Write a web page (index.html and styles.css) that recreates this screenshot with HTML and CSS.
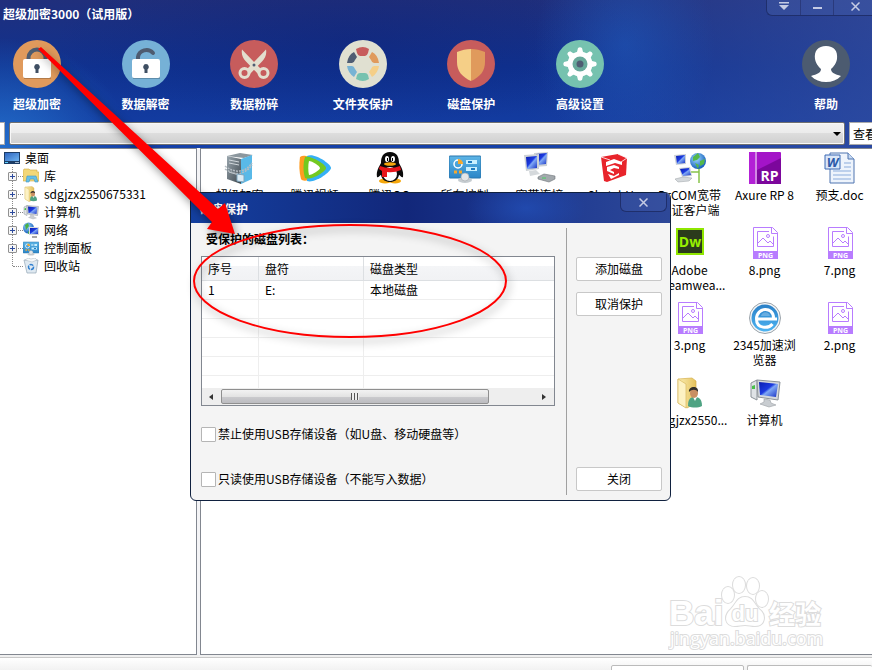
FILE: index.html
```
<!DOCTYPE html>
<html lang="zh-CN">
  <head>
    <meta charset="utf-8">
    <title>超级加密3000</title>
    <link rel="stylesheet" href="styles.css">
  </head>

  <body>
    <svg class="sprite" aria-hidden="true">
      <defs>
        <linearGradient id="g-screen" x1="0" y1="0" x2="1" y2="1">
          <stop offset="0" stop-color="#0a1db0"/>
          <stop offset=".45" stop-color="#1c3be0"/>
          <stop offset=".55" stop-color="#7fa8f5"/>
          <stop offset="1" stop-color="#1630c4"/>
        </linearGradient>
        <linearGradient id="g-folder" x1="0" y1="0" x2="1" y2="0">
          <stop offset="0" stop-color="#fbeeb4"/>
          <stop offset="1" stop-color="#e5c25c"/>
        </linearGradient>
        <linearGradient id="g-panel" x1="0" y1="0" x2="0" y2="1">
          <stop offset="0" stop-color="#5db5e6"/>
          <stop offset="1" stop-color="#2b86c8"/>
        </linearGradient>
        <linearGradient id="g-desk" x1="0" y1="0" x2="1" y2="1">
          <stop offset="0" stop-color="#2f66c0"/>
          <stop offset="1" stop-color="#6fb4f0"/>
        </linearGradient>
        <linearGradient id="g-steel" x1="0" y1="0" x2="1" y2="1">
          <stop offset="0" stop-color="#9aa6ae"/>
          <stop offset="1" stop-color="#3c464d"/>
        </linearGradient>
        <radialGradient id="g-globe" cx=".4" cy=".35" r=".7">
          <stop offset="0" stop-color="#9fdcff"/>
          <stop offset="1" stop-color="#0c55b8"/>
        </radialGradient>
        <linearGradient id="g-browser" x1="0" y1="0" x2="0" y2="1">
          <stop offset="0" stop-color="#2a7fc6"/>
          <stop offset="1" stop-color="#4db4f2"/>
        </linearGradient>
      </defs>

      <symbol id="i-computer" viewBox="0 0 32 32">
        <path d="M2 6l6-3v20l-6-3z" fill="#dfe3e6" stroke="#8b9298"/>
        <path d="M3 9l3-1v4l-3 0z" fill="#49c04a"/>
        <path d="M8 3l23 2-2 18-20-3z" fill="#d4d8dc" stroke="#8b9298"/>
        <path d="M10 5l19 2-2 13-16-2z" fill="url(#g-screen)"/>
        <path d="M15 22l6 1 1 3 5 2-7 2-9-3 4-2z" fill="#c9cdd1" stroke="#9aa0a5" stroke-width=".6"/>
      </symbol>

      <symbol id="i-user" viewBox="0 0 32 32">
        <path d="M4 2l14-1 4 3v22l-9 5-9-5z" fill="url(#g-folder)" stroke="#d5b04c" stroke-width=".7"/>
        <path d="M4 2l8 5v24l-8-5z" fill="#fdf2c4" stroke="#d9b95e" stroke-width=".7"/>
        <path d="M14 29c0-8 3-9 7-9s7 2 7 9c-4 2-10 2-14 0z" fill="#4fa383"/>
        <path d="M19 20l2 4 2-4z" fill="#fff"/>
        <ellipse cx="20" cy="16" rx="4" ry="5" fill="#c98f63"/>
        <path d="M15 15c-1-6 10-7 9 0-2-3-6-3-9 0z" fill="#33302c"/>
      </symbol>

      <symbol id="i-control" viewBox="0 0 32 32">
        <rect x="0" y="4" width="32" height="22" rx="1" fill="url(#g-panel)" stroke="#2a76ad"/>
        <circle cx="9" cy="12" r="4" fill="none" stroke="#fff" stroke-width="1.500"/>
        <path d="M9 12V7a5 5 0 0 1 5 5z" fill="#f6a82c"/>
        <path d="M17 8h11v4H17zM17 15h11v4H17z" fill="#c9f0ff"/>
        <path d="M19 10h4M22 17h4" stroke="#1f7cc0" stroke-width="2"/>
        <path d="M5 20h3M10 20h3" stroke="#f6a82c" stroke-width="3"/>
        <ellipse cx="16" cy="28" rx="7" ry="3" fill="#c6ccd0"/>
        <ellipse cx="16" cy="25" rx="4" ry="4" fill="#e3e6e8" stroke="#9da4a9" stroke-width=".6"/>
      </symbol>

      <symbol id="i-png" viewBox="0 0 32 32">
        <path d="M4.500 24V.5h19l5 5V24M22.500.5v6h6" fill="#fff" stroke="#b87cff"/>
        <path d="M20 4.500H8.500v15h16v-10M9 16l5-5 5 5 2-2 3 3" fill="none" stroke="#b87cff"/>
        <circle cx="19" cy="9" r="1.500" fill="none" stroke="#b87cff"/>
        <path d="M4 24h25v8H4z" fill="#b87cff"/>
        <text x="16.500" y="31" class="png-tag">PNG</text>
      </symbol>

      <symbol id="i-lock-body" viewBox="0 0 48 48">
        <rect x="11" y="20" width="27" height="19" fill="#000" opacity=".2"/>
        <rect x="10" y="19" width="28" height="19" rx="2" fill="#fff"/>
        <path d="M24 24a3 3 0 0 1 1.500 5.500V33h-3v-3.500A3 3 0 0 1 24 24z" fill="#3f4f63"/>
      </symbol>
    </svg>

    <header class="top">
      <div class="titlebar">
        <h1 class="title">超级加密3000（试用版）</h1>
        <div class="window-buttons">
          <button type="button" class="menu" aria-label="菜单">
            <svg width="10" height="8" viewBox="0 0 10 8"><path d="M0 0h10v1.500H0zM0 3h10L5 8z" fill="#c5cbe4"/></svg>
          </button>
          <button type="button" class="min" aria-label="最小化">
            <svg width="9" height="8" viewBox="0 0 9 8"><path d="M0 5h9v2H0z" fill="#c5cbe4"/></svg>
          </button>
          <button type="button" class="close" aria-label="关闭窗口">
            <svg width="9" height="9" viewBox="0 0 9 9"><path d="M.5.5l8 8M8.500.5l-8 8" stroke="#c5cbe4" stroke-width="1.500"/></svg>
          </button>
        </div>
      </div>

      <div class="toolbar">
        <nav class="tools">
          <button type="button" class="tool">
            <svg viewBox="0 0 48 48">
              <circle cx="24" cy="24" r="24" fill="#e09a5c"/>
              <path d="M15.500 19v-1a8.500 8.500 0 0 1 17 0v1" fill="none" stroke="#4e5c70" stroke-width="4"/>
              <use href="#i-lock-body"/>
            </svg>
            <span>超级加密</span>
          </button>
          <button type="button" class="tool">
            <svg viewBox="0 0 48 48">
              <circle cx="24" cy="24" r="24" fill="#76b1d6"/>
              <path d="M16 19v-2a8.500 8 0 0 1 15-4" fill="none" stroke="#4e5c70" stroke-width="4" stroke-linecap="round"/>
              <use href="#i-lock-body"/>
            </svg>
            <span>数据解密</span>
          </button>
          <button type="button" class="tool">
            <svg viewBox="0 0 48 48">
              <circle cx="24" cy="24" r="24" fill="#c75c5c"/>
              <path d="M36 9.500c1 5-1 9-4 12L19 35l-4-4 9-9z" fill="#e3dfcf"/>
              <path d="M12 9.500c-1 5 1 9 4 12L29 35l4-4-9-9z" fill="#e3dfcf"/>
              <circle cx="14.500" cy="33" r="4.500" fill="#c75c5c" stroke="#e3dfcf" stroke-width="3"/>
              <circle cx="33.500" cy="33" r="4.500" fill="#c75c5c" stroke="#e3dfcf" stroke-width="3"/>
              <circle cx="24" cy="25" r="1.500" fill="#4f5d73"/>
            </svg>
            <span>数据粉碎</span>
          </button>
          <button type="button" class="tool">
            <svg viewBox="0 0 48 48">
              <circle cx="24" cy="24" r="24" fill="#e0e0d1"/>
              <path d="M17 9q7-4 13 0l-1 4q-1 3-3 3h-5q-2 0-3-3z" fill="#c75c5c"/>
              <path id="seg" d="M33 12q6 3 7 11h-5q-2 0-3-3l-2-3z" fill="#e09a5c"/>
              <path d="M33 37q6-4 7-11h-5q-2 0-3 3l-2 3z" fill="#f5cf87"/>
              <path d="M17 39q7 4 13 0l-1-4q-1-2-3-2h-5q-2 0-3 2z" fill="#76c2af"/>
              <path d="M15 37q-6-4-7-11h5q2 0 3 3l2 3z" fill="#77b3d4"/>
              <path d="M15 12q-6 3-7 11h5q2 0 3-3l2-3z" fill="#4f5d73"/>
            </svg>
            <span>文件夹保护</span>
          </button>
          <button type="button" class="tool">
            <svg viewBox="0 0 48 48">
              <circle cx="24" cy="24" r="24" fill="#c75c5c"/>
              <path d="M24 9c5 0 9 1 14 3v10c0 9-5 15-14 19z" fill="#e09a5c"/>
              <path d="M24 9c-5 0-9 1-14 3v10c0 9 5 15 14 19z" fill="#f5cf87"/>
            </svg>
            <span>磁盘保护</span>
          </button>
          <button type="button" class="tool">
            <svg viewBox="0 0 48 48">
              <circle cx="24" cy="24" r="24" fill="#76c2af"/>
              <g fill="#fff">
                <circle cx="24" cy="24" r="12.500"/>
                <path id="cog" d="M20.500 14l1.500-6q2-1.500 4 0l1.500 6v20L26 40q-2 1.500-4 0l-1.500-6z"/>
                <use href="#cog" transform="rotate(45 24 24)"/>
                <use href="#cog" transform="rotate(90 24 24)"/>
                <use href="#cog" transform="rotate(135 24 24)"/>
              </g>
              <circle cx="24" cy="24" r="7.500" fill="#68aa9b"/>
              <circle cx="24" cy="24" r="3.500" fill="#4f5d73"/>
            </svg>
            <span>高级设置</span>
          </button>
        </nav>
        <button type="button" class="tool">
          <svg viewBox="0 0 48 48">
            <circle cx="24" cy="24" r="24" fill="#4c5b70"/>
            <path d="M24 6c8 0 12 5 11 13-1 5-3 7-6 10 0 4 4 5 10 7-4 4-9 6-15 6s-11-2-15-6c6-2 10-3 10-7-3-3-5-5-6-10C12 11 16 6 24 6z" fill="#fff"/>
          </svg>
          <span>帮助</span>
        </button>
      </div>

      <div class="address">
        <div class="back"></div>
        <div class="combo">
          <select aria-label="路径"><option></option></select>
        </div>
        <button type="button" class="view">查看</button>
      </div>
    </header>

    <main class="panes">
      <aside class="tree">
        <div class="root">
          <svg viewBox="0 0 16 16"><path d="M0 2h16v12H0z" fill="#1d3d66"/><path d="M1 3h14v8H1z" fill="url(#g-desk)"/><path d="M1 12.500h3" stroke="#5fd0ff"/><path d="M11 12.500h4" stroke="#9fb4cc"/></svg>
          桌面
        </div>
        <ul>
          <li>
            <i class="plus"></i>
            <svg viewBox="0 0 16 16"><path d="M0 3l1-2h5l1 1h7v2h2v9H0z" fill="#f2d778" stroke="#cfa93f" stroke-width=".6"/><path d="M3 14l1-6h9l2 6h-3l-1-3H7l-1 3z" fill="#66bfe8" stroke="#3f97c4" stroke-width=".6"/></svg>
            库
          </li>
          <li><i class="plus"></i><svg viewBox="0 0 32 32"><use href="#i-user"/></svg>sdgjzx2550675331</li>
          <li><i class="plus"></i><svg viewBox="0 0 32 32"><use href="#i-computer"/></svg>计算机</li>
          <li>
            <i class="plus"></i>
            <svg viewBox="0 0 16 16"><circle cx="5.500" cy="6" r="5.500" fill="url(#g-globe)"/><path d="M2 3l3-2 1 3-3 4zM5 9l2 2-2 1z" fill="#49b045"/><path d="M6 5h10v8H6z" fill="#d7dadd"/><path d="M7 6h8v6H7z" fill="url(#g-screen)"/><path d="M9 15h5" stroke="#888" stroke-width="1.500"/></svg>
            网络
          </li>
          <li><i class="plus"></i><svg viewBox="0 0 32 32"><use href="#i-control"/></svg>控制面板</li>
          <li>
            <i></i>
            <svg viewBox="0 0 16 16"><path d="M1 2l14 0-2 13H4z" fill="#dfe9f1" stroke="#94a6b5" stroke-width=".7"/><path d="M2 2l3-2 3 1 4-1 2 2-5 2z" fill="#f5f8fa" stroke="#a5b2bd" stroke-width=".5"/><circle cx="8" cy="9" r="2.500" fill="none" stroke="#2f7fd0" stroke-width="1.500" stroke-dasharray="4 1"/></svg>
            回收站
          </li>
        </ul>
      </aside>

      <section class="desktop">
        <a href="#" class="file">
          <svg viewBox="0 0 32 32">
            <path d="M3 4l13-3 13 2-9 3z" fill="#8c979e"/>
            <path d="M3 4l14 3v25L3 27z" fill="url(#g-steel)"/>
            <path d="M17 7l11-4v24l-11 5z" fill="#59b9e8"/>
            <path d="M5 8l10 2M5 11l10 2M5 20l10 3" stroke="#d0d7db"/>
            <path d="M1 14q8 6 15 5t12-8M1 17q9 6 16 4t11-8" fill="none" stroke="#b5bdc3" stroke-width="1.500" stroke-dasharray="2 1"/>
            <path d="M13 22l7 1v7l-7-1z" fill="#dcecf5" stroke="#7ea5bd"/>
          </svg>
          <span>超级加密</span>
        </a>
        <a href="#" class="file">
          <svg viewBox="0 0 32 32">
            <path d="M1 5c3-2 6-1 8 0v23c-2 1-6 1-7-1C0 20 0 12 1 5z" fill="#ff9d22"/>
            <path d="M8 4c7-4 24 8 24 12S15 32 8 29z" fill="#36b0f5"/>
            <path d="M6 5c5-2 21 7 21 11S11 29 6 26c-2-6-2-15 0-21z" fill="#73c920"/>
            <path d="M10 9c3 0 11 5 11 7s-8 7-11 7c-1-4-1-10 0-14z" fill="#fff"/>
          </svg>
          <span>腾讯视频</span>
        </a>
        <a href="#" class="file">
          <svg viewBox="0 0 32 32">
            <ellipse cx="11" cy="29" rx="6" ry="2.500" fill="#f5a70c"/><ellipse cx="21" cy="29" rx="6" ry="2.500" fill="#f5a70c"/>
            <path d="M16 0c7 0 9 5 9 11 2 4 5 8 4 14-2 1-3-2-4-2-1 5-5 7-9 7s-8-2-9-7c-1 0-2 3-4 2-1-6 2-10 4-14C7 5 9 0 16 0z" fill="#0b0b0b"/>
            <ellipse cx="16" cy="22" rx="7" ry="7" fill="#fff"/>
            <ellipse cx="13" cy="7" rx="2" ry="3" fill="#fff"/><ellipse cx="19" cy="7" rx="2" ry="3" fill="#fff"/>
            <path d="M13.500 6v3M18.500 6v3" stroke="#000"/>
            <ellipse cx="16" cy="12" rx="6" ry="1.800" fill="#f5a70c"/>
            <path d="M6 14q10 4 20 0l1 4q-7 3-14 2v5H8v-6l-3-2z" fill="#e8161b"/>
          </svg>
          <span>腾讯QQ</span>
        </a>
        <a href="#" class="file"><svg viewBox="0 0 32 32"><use href="#i-control"/></svg><span>所有控制面...</span></a>
        <a href="#" class="file">
          <svg viewBox="0 0 32 32">
            <path d="M10 1l14-1-1 14-12 1z" fill="#ccd1d5"/><path d="M12 2l11-1-1 11-9 1z" fill="url(#g-screen)"/>
            <path d="M0 3l15-1v15L2 19z" fill="#ccd1d5"/><path d="M2 5l11-1v12l-10 1z" fill="url(#g-screen)"/>
            <path d="M5 19l7-1 4 4-10 2z" fill="#d5d9dc"/>
            <path d="M14 25l6-3 11 2v3l-6 3-11-3z" fill="#a3a9ad" stroke="#6d7478" stroke-width=".6"/><path d="M18 26h4" stroke="#44d060"/>
          </svg>
          <span>宽带连接</span>
        </a>
        <a href="#" class="file">
          <svg viewBox="0 0 32 32">
            <path d="M2 5l17-3 9 4-1 17-19 7-3-1z" fill="#e8242b"/>
            <path d="M7 10l8-3 8 3v3l-7-2-9 3zM8 15l7-2 5 2v2l-5-1-4 2 4 2v2l-7-3zM9 22l6 2 5-3v2l-8 4z" fill="#fff"/>
            <path d="M2 5l9 3M19 2l9 4-6 4" fill="none" stroke="#fff" stroke-width=".8"/>
          </svg>
          <span>SketchUp</span>
        </a>
        <a href="#" class="file">
          <svg viewBox="0 0 32 32">
            <path d="M17 20h8V10M25 20v11" stroke="#88c34b" stroke-width="1.500" fill="none"/>
            <path d="M0 3l12-1v10L2 13z" fill="#ccd1d5"/><path d="M2 4l9-1v8l-8 1z" fill="url(#g-screen)"/>
            <path d="M5 16l11-1 2 9-10 1z" fill="#ccd1d5"/><path d="M6 17l9-1 2 7-8 1z" fill="url(#g-screen)"/>
            <path d="M1 27l8-2 9 1-3 3-11 1z" fill="#d5d9dc" stroke="#9aa0a4" stroke-width=".5"/>
            <circle cx="24" cy="9" r="8" fill="url(#g-globe)"/>
            <path d="M19 5l5-4 2 4-3 3-4 1zM26 9l5-2-1 5-4 2zM21 11l4 2-1 4z" fill="#55b848"/>
          </svg>
          <span>DrCOM宽带认证客户端</span>
        </a>
        <a href="#" class="file">
          <svg viewBox="0 0 32 32">
            <rect width="32" height="32" rx="1" fill="#a414c8"/>
            <path d="M0 0h6v32H0z" fill="#b321d6"/><path d="M8 18L32 6v26H8z" fill="#7c079c"/>
            <path d="M7 0v32" stroke="#fff"/>
            <text x="20.500" y="29" class="rp">RP</text>
          </svg>
          <span>Axure RP 8</span>
        </a>
        <a href="#" class="file">
          <svg viewBox="0 0 32 32">
            <path d="M6 1h18l6 6v24H6z" fill="#eef4fc" stroke="#4e74b0"/>
            <path d="M24 1v6h6" fill="#c8daf2" stroke="#4e74b0"/>
            <path d="M20 11h7M20 15h7M9 19h18M9 23h18M9 27h18" stroke="#8bacdc"/>
            <path d="M1 3h15v14H1z" fill="#dbe7f8" stroke="#3b68b4"/>
            <text x="8.500" y="15" class="word">W</text>
          </svg>
          <span>预支.doc</span>
        </a>

        <a href="#" class="file col-7">
          <svg viewBox="0 0 32 32">
            <rect x="2" y="1" width="28" height="27" fill="#8fe600"/>
            <rect x="4" y="3" width="24" height="23" fill="#2b3b1c"/>
            <text x="16" y="20" class="dw">Dw</text>
          </svg>
          <span>Adobe Dreamwea...</span>
        </a>
        <a href="#" class="file"><svg viewBox="0 0 32 32"><use href="#i-png"/></svg><span>8.png</span></a>
        <a href="#" class="file"><svg viewBox="0 0 32 32"><use href="#i-png"/></svg><span>7.png</span></a>

        <a href="#" class="file col-7"><svg viewBox="0 0 32 32"><use href="#i-png"/></svg><span>3.png</span></a>
        <a href="#" class="file">
          <svg viewBox="0 0 32 32">
            <circle cx="16" cy="16" r="15.500" fill="#f4f6f8" stroke="#9aa3aa"/>
            <circle cx="16" cy="16" r="13.500" fill="url(#g-browser)"/>
            <path d="M12 14h9c-1-5-8-5-9 0z" fill="#fff" opacity=".25"/>
            <path d="M8 17h20M24.500 16c0-12-17-11-17 1 0 10 12 10 16 5" fill="none" stroke="#fff" stroke-width="3"/>
          </svg>
          <span>2345加速浏览器</span>
        </a>
        <a href="#" class="file"><svg viewBox="0 0 32 32"><use href="#i-png"/></svg><span>2.png</span></a>

        <a href="#" class="file col-7"><svg viewBox="0 0 32 32"><use href="#i-user"/></svg><span>sdgjzx2550...</span></a>
        <a href="#" class="file"><svg viewBox="0 0 32 32"><use href="#i-computer"/></svg><span>计算机</span></a>
      </section>
    </main>

    <footer class="status">
      <div class="cell"></div>
      <div class="cell"></div>
    </footer>

    <svg class="watermark" width="160" height="76" viewBox="0 0 160 76">
      <g class="wm-shape">
        <text x="1" y="49" class="wm-bai">Bai</text>
        <ellipse cx="60" cy="19" rx="6" ry="8"/>
        <ellipse cx="71" cy="9" rx="6" ry="8"/>
        <ellipse cx="85" cy="10" rx="6" ry="8"/>
        <ellipse cx="94" cy="23" rx="6" ry="8"/>
        <path d="M77 21c8 0 9 7 14 12 8 6 6 17-4 17-4 0-6-1-10-1s-6 1-10 1c-10 0-12-10-4-17 5-5 6-12 14-12z"/>
        <text x="77" y="45" class="wm-du">du</text>
        <text x="101" y="48" class="wm-cn">经验</text>
        <text x="2" y="69" class="wm-url">jingyan.baidu.com</text>
      </g>
    </svg>

    <div class="dialog" role="dialog" aria-label="磁盘保护">
      <div class="dialog-title">
        <h2>磁盘保护</h2>
        <button type="button" aria-label="关闭对话框">
          <svg width="9" height="9" viewBox="0 0 9 9"><path d="M.5.5l8 8M8.500.5l-8 8" stroke="#c5cbe4" stroke-width="1.500"/></svg>
        </button>
      </div>
      <div class="dialog-body">
        <div class="settings">
          <h3>受保护的磁盘列表：</h3>
          <div class="list">
            <table>
              <thead>
                <tr><th class="num">序号</th><th class="drive">盘符</th><th>磁盘类型</th></tr>
              </thead>
              <tbody>
                <tr><td>1</td><td>E:</td><td>本地磁盘</td></tr>
                <tr><td></td><td></td><td></td></tr>
                <tr><td></td><td></td><td></td></tr>
                <tr><td></td><td></td><td></td></tr>
                <tr><td></td><td></td><td></td></tr>
                <tr class="last"><td></td><td></td><td></td></tr>
              </tbody>
            </table>
            <div class="scrollbar">
              <i class="arrow-left"></i>
              <div class="thumb"><i></i></div>
              <i class="arrow-right"></i>
            </div>
          </div>
          <label><input type="checkbox">禁止使用USB存储设备（如U盘、移动硬盘等）</label>
          <label><input type="checkbox">只读使用USB存储设备（不能写入数据）</label>
        </div>
        <div class="actions">
          <button type="button">添加磁盘</button>
          <button type="button">取消保护</button>
          <button type="button" class="done">关闭</button>
        </div>
      </div>
    </div>

    <svg class="marks" width="520" height="350" viewBox="0 0 520 350" aria-hidden="true">
      <ellipse cx="350" cy="281" rx="156" ry="56" fill="none" stroke="#f00" stroke-width="2"/>
      <path d="M38 49l3-2L218 209l7-6 10 31-28-5 5-7z" fill="#f00"/>
    </svg>
  </body>
</html>
```
FILE: styles.css
```
*, *:before, *:after {
  box-sizing: border-box;
}
body {
  position: relative;
  display: flex;
  flex-direction: column;
  margin: 0;
  min-height: 100vh;
  overflow: hidden;
  font-family: "Noto Sans CJK SC", sans-serif;
  font-size: 12px;
  line-height: 18px;
  color: #000;
  background: #fff;
}
h1, h2, h3, ul {
  margin: 0;
  padding: 0;
  font-size: 12px;
}
button, select, input {
  margin: 0;
  padding: 0;
  border: 0;
  border-radius: 0;
  font: inherit;
  color: inherit;
  background: none;
}
svg {
  display: block;
  flex: none;
}
.sprite {
  position: absolute;
  width: 0;
  height: 0;
}

/* top */
.top {
  color: #fff;
  background:
    radial-gradient(ellipse 130px 110px at 0 100%, rgba(40,125,215,.75), rgba(40,125,215,0)),
    radial-gradient(ellipse 90px 110px at 625px 45px, rgba(30,90,190,.55), rgba(30,90,190,0)),
    radial-gradient(ellipse 300px 90px at 350px 40px, rgba(8,26,110,.3), rgba(8,26,110,0)),
    linear-gradient(to right, rgba(18,56,160,0) 60%, rgba(52,78,160,.7)),
    linear-gradient(#202f7c, #103290 45%, #1440a8);
}
.titlebar {
  display: flex;
  align-items: flex-start;
  justify-content: space-between;
  height: 28px;
}
.title {
  padding: 5px 3px;
}
.window-buttons {
  display: flex;
  height: 16px;
  border: 1px solid #1f2f6c;
  border-top: 0;
  border-right: 0;
  border-radius: 0 0 0 6px;
  background: rgba(80,105,180,.3);
}
.window-buttons button {
  display: flex;
  justify-content: center;
  padding-top: 2px;
  width: 33px;
}
.window-buttons button + button {
  border-left: 1px solid #2a3a7c;
}
.window-buttons .close {
  width: 39px;
  padding-left: 4px;
}
.toolbar {
  display: flex;
  padding: 12px 9px 8px 0;
}
.tools {
  display: flex;
  flex: 1;
  justify-content: space-between;
  margin-right: 172px;
}
.tool {
  display: flex;
  flex-direction: column;
  align-items: center;
  gap: 6px;
  width: 74px;
  line-height: 20px;
  font-weight: bold;
}
.tool svg {
  width: 48px;
  height: 48px;
}
.address {
  display: flex;
  gap: 4px;
  height: 26px;
  padding-bottom: 3px;
}
.back {
  width: 5px;
  border: 1px solid #aaa;
  border-left: 0;
  background: #fff;
}
.combo {
  position: relative;
  flex: 1;
}
.combo:after {
  content: "";
  position: absolute;
  right: 4px;
  top: 10px;
  border: 4px solid transparent;
  border-top-color: #000;
  border-bottom: 0;
}
.combo select {
  display: block;
  width: 100%;
  height: 23px;
  appearance: none;
  border: 1px solid #707070;
  border-radius: 2px;
  box-shadow: inset 0 0 0 1px #f8f8f8;
  background: linear-gradient(#f2f2f2, #ebebeb 50%, #ddd 50%, #cfcfcf);
}
.view {
  width: 23px;
  padding-left: 3px;
  border: 1px solid #aaa;
  border-right: 0;
  overflow: hidden;
  text-align: left;
  white-space: nowrap;
  color: #000;
  background: #fff;
}

/* panes */
.panes {
  display: flex;
  flex: 1;
  gap: 3px;
  background: #f4f4f6;
}
.tree, .desktop {
  border: 1px solid #828790;
  background: #fff;
}
.tree {
  flex: none;
  width: 197px;
  border-left: 0;
}
.root {
  display: flex;
  align-items: center;
  gap: 5px;
  padding-left: 4px;
}
.tree svg {
  width: 16px;
  height: 16px;
}
.tree ul {
  list-style: none;
  position: relative;
}
.tree ul:before {
  content: "";
  position: absolute;
  left: 12px;
  top: 0;
  height: 99px;
  border-left: 1px dotted #888;
}
.tree li {
  position: relative;
  display: flex;
  align-items: center;
  gap: 5px;
  padding-left: 8px;
}
.tree li i {
  width: 10px;
  height: 9px;
}
.tree li:before {
  content: "";
  position: absolute;
  left: 13px;
  width: 10px;
  border-top: 1px dotted #888;
}
.tree li .plus {
  position: relative;
  width: 9px;
  margin-right: 1px;
  border: 1px solid #919191;
  border-radius: 1px;
  background:
    linear-gradient(#2c4a9c, #2c4a9c) center / 5px 1px no-repeat,
    linear-gradient(#2c4a9c, #2c4a9c) center / 1px 5px no-repeat,
    #f6f6f6;
}
.desktop {
  display: grid;
  flex: 1;
  grid-template-columns: repeat(9, 75px);
  grid-auto-rows: 75px;
  align-content: start;
  min-width: 0;
  padding: 3px 0 0 1px;
  border-right: 0;
  overflow: hidden;
}
.file {
  display: flex;
  flex-direction: column;
  align-items: center;
  gap: 3px;
  line-height: 15px;
  text-align: center;
  text-decoration: none;
  color: #000;
}
.file svg {
  width: 32px;
  height: 32px;
}
.file span {
  width: 68px;
}
.col-7 {
  grid-column: 7;
}
.png-tag, .rp, .word, .dw {
  font-family: "Open Sans", sans-serif;
  font-weight: bold;
  text-anchor: middle;
  fill: #fff;
}
.png-tag {
  font-size: 7px;
}
.rp {
  font-size: 14px;
}
.word {
  font-size: 13px;
  font-style: italic;
  fill: #2c5aa8;
}
.dw {
  font-size: 14px;
  fill: #98f000;
}

/* status */
.status {
  display: flex;
  justify-content: flex-end;
  gap: 3px;
  height: 15px;
  padding-top: 10px;
  overflow: hidden;
  background: linear-gradient(#f0f0f0 2px, #c8c8c8 2px, #c8c8c8 3px, #fff 3px, #f2f2f2);
}
.status .cell {
  width: 133px;
  height: 20px;
  border: 1px solid #bbb;
  border-radius: 2px;
  background: #fff;
}
.status .cell:last-child {
  width: 125px;
  border-right: 0;
}

/* dialog */
.dialog {
  position: absolute;
  left: 190px;
  top: 192px;
  width: 481px;
  border: 1px solid #10213f;
  border-radius: 6px;
  overflow: hidden;
  background: #f4f4f4;
}
.dialog-title {
  display: flex;
  align-items: flex-start;
  justify-content: space-between;
  height: 30px;
  padding: 0 3px 0 9px;
  color: #fff;
  background:
    radial-gradient(ellipse 60px 30px at 335px 15px, rgba(35,80,185,.7), rgba(35,80,185,0)),
    linear-gradient(to right, #1440a0, #12277a 45%, #1c3890 70%, #2e4898);
}
.dialog-title h2 {
  padding-top: 7px;
}
.dialog-title button {
  display: flex;
  justify-content: center;
  width: 47px;
  height: 19px;
  padding-top: 5px;
  border: 1px solid #1f2f6c;
  border-top: 0;
  border-radius: 0 0 6px 6px;
  background: rgba(80,105,180,.25);
}
.dialog-body {
  display: flex;
  padding: 5px 0 5px 10px;
}
.settings {
  flex: 1;
  margin-right: 11px;
  padding-bottom: 6px;
}
.settings h3 {
  padding: 0 5px;
  margin-bottom: 6px;
  line-height: 22px;
}
.list {
  margin-bottom: 18px;
  border: 1px solid #828790;
  background: #fff;
}
table {
  width: 100%;
  table-layout: fixed;
  border-collapse: separate;
  border-spacing: 0;
}
th, td {
  height: 19px;
  padding: 0 6px;
  border-right: 1px solid #eee;
  border-bottom: 1px solid #eee;
  line-height: 18px;
  text-align: left;
  font-weight: normal;
}
th {
  height: 24px;
  border-color: #dcdfe2;
  background: linear-gradient(#fff 40%, #f4f5f7 40%, #f1f2f4);
}
th:last-child, td:last-child {
  border-right: 0;
}
.last td {
  height: 12px;
  border-bottom: 0;
}
.num {
  width: 57px;
}
.drive {
  width: 105px;
}
.scrollbar {
  display: flex;
  align-items: center;
  height: 17px;
  background: #eee;
}
.arrow-left, .arrow-right {
  border: 3px solid transparent;
}
.arrow-left {
  margin: 0 8px 0 4px;
  border-right: 4px solid #333;
}
.arrow-right {
  margin: 0 5px 0 auto;
  border-left: 4px solid #333;
}
.thumb {
  display: flex;
  align-items: center;
  justify-content: center;
  width: 76%;
  height: 15px;
  border: 1px solid #8f8f8f;
  border-radius: 2px;
  background: linear-gradient(#f2f2f2, #e3e3e3 50%, #cbcbce 50%, #bcbcc0);
}
.thumb i {
  width: 8px;
  height: 7px;
  background: repeating-linear-gradient(to right, #555 0, #555 1px, #eee 1px, #eee 3px);
}
.settings label {
  display: flex;
  align-items: center;
  gap: 2px;
  line-height: 20px;
}
.settings label + label {
  margin-top: 25px;
}
.settings input {
  width: 15px;
  height: 15px;
  appearance: none;
  border: 1px solid #b5b5b5;
  border-radius: 1px;
  background: #fff;
}
.actions {
  display: flex;
  flex-direction: column;
  gap: 11px;
  width: 104px;
  padding: 29px 8px 4px 9px;
  border-left: 1px solid #a0a0a0;
}
.actions button {
  height: 24px;
  border: 1px solid #c8c8c8;
  border-radius: 2px;
  background: #fff;
}
.actions .done {
  margin-top: auto;
}

/* red arrow and circle over everything */
.marks {
  position: absolute;
  left: 0;
  top: 0;
  pointer-events: none;
  filter: drop-shadow(2px 4px 4px rgba(0,0,0,.4));
}

.watermark {
  position: absolute;
  right: 44px;
  bottom: 18px;
}
.wm-shape {
  fill: #fff;
  stroke: #dcdcdc;
  stroke-width: 2px;
  paint-order: stroke;
}
.wm-bai, .wm-du {
  font-family: "Liberation Sans", sans-serif;
  font-weight: bold;
  font-size: 35px;
}
.wm-du {
  font-size: 22px;
  text-anchor: middle;
}
.wm-cn {
  font-size: 26px;
  font-weight: bold;
}
.wm-url {
  font-family: "Open Sans", sans-serif;
  font-size: 18px;
}
```
